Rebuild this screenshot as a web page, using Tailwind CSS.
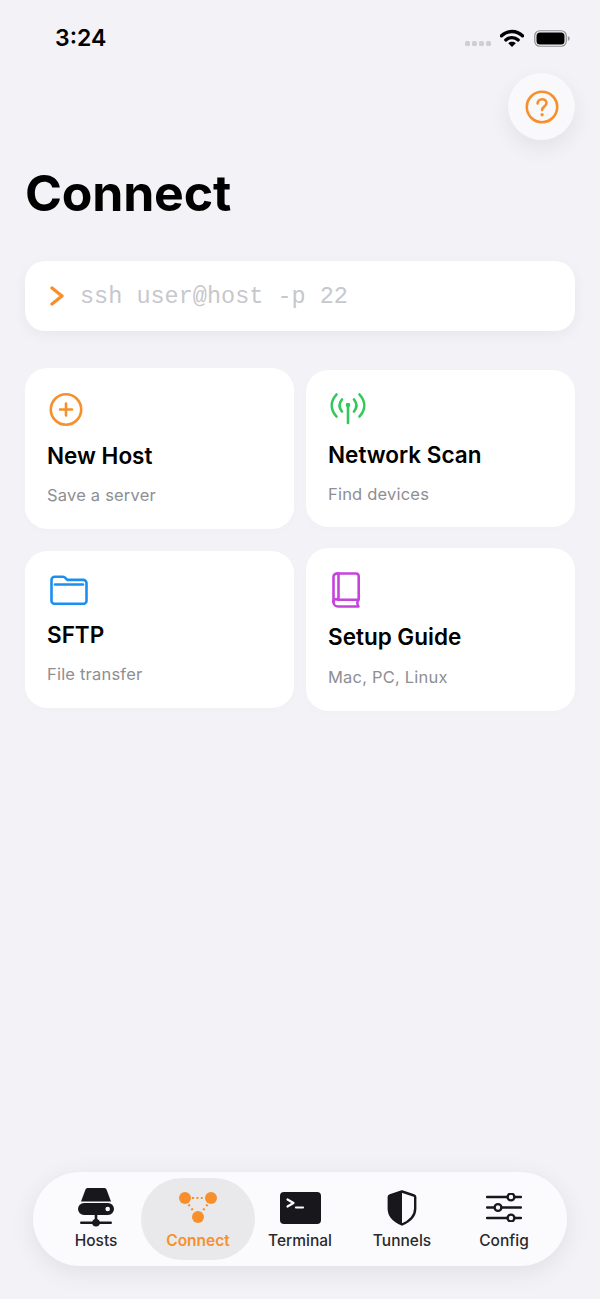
<!DOCTYPE html>
<html lang="en">
<head>
  <meta charset="UTF-8" />
  <meta name="viewport" content="width=device-width, initial-scale=1.0" />
  <title>Connect</title>
  <script src="https://cdn.jsdelivr.net/npm/@tailwindcss/browser@4"></script>
</head>
<body class="bg-[#f2f2f7] font-['Inter',sans-serif] text-black">
<div class="w-[600px] h-[1299px] flex flex-col overflow-hidden">

  <!-- status bar -->
  <div class="h-[73px] flex items-start justify-between pl-[55px] pr-[30px] pt-[23px] shrink-0">
    <span class="text-[23px] leading-[30px] font-semibold">3:24</span>
    <div class="flex items-start">
      <div class="flex gap-[2px] mt-[18px] mr-[9px]">
        <span class="w-[5px] h-[5px] rounded-[1.5px] bg-[#cfcfd3]"></span>
        <span class="w-[5px] h-[5px] rounded-[1.5px] bg-[#cfcfd3]"></span>
        <span class="w-[5px] h-[5px] rounded-[1.5px] bg-[#cfcfd3]"></span>
        <span class="w-[5px] h-[5px] rounded-[1.5px] bg-[#cfcfd3]"></span>
      </div>
      <svg class="mt-[6px]" width="24" height="18" viewBox="0 0 24 18" fill="none">
        <path d="M1.500 6.800C7.600 1.100 16.400 1.100 22.500 6.800" stroke="#000" stroke-width="3.400" stroke-linecap="round"/>
        <path d="M5.800 11C9.300 7.700 14.700 7.700 18.200 11" stroke="#000" stroke-width="3.200" stroke-linecap="round"/>
        <path d="M12 18L8.200 14.200C10.400 12.300 13.600 12.300 15.800 14.200Z" fill="#000"/>
      </svg>
      <svg class="mt-[7px] ml-[10px]" width="36" height="17" viewBox="0 0 36 17" fill="none">
        <rect x=".75" y=".75" width="31.500" height="15.500" rx="5" stroke="#8e8e93" stroke-width="1.200"/>
        <rect x="2.500" y="2.500" width="28" height="12" rx="3.500" fill="#000"/>
        <path d="M33.800 6v5c1.200-.4 2-1.400 2-2.500s-.8-2.100-2-2.500Z" fill="#9a9a9e"/>
      </svg>
    </div>
  </div>

  <!-- help button -->
  <div class="flex justify-end pr-[25px] shrink-0">
    <div class="w-[67px] h-[67px] rounded-full bg-[#f9f9fb] shadow-[0_8px_22px_rgba(0,0,0,0.07)] flex items-center justify-center">
      <svg width="34" height="34" viewBox="0 0 34 34" fill="none" stroke="#f7902c" stroke-width="2.600" stroke-linecap="round">
        <circle cx="17" cy="17" r="15.200"/>
        <path d="M12.600 13.400c0-2.500 2-4.200 4.500-4.200s4.400 1.600 4.400 3.900c0 3.400-4.400 3.600-4.400 6.800"/>
        <path d="M17.100 24.600v.2" stroke-width="3.200"/>
      </svg>
    </div>
  </div>

  <h1 class="mt-[20px] pl-[25px] text-[50px] leading-[66px] font-bold tracking-[-0.2px] shrink-0">Connect</h1>

  <!-- command field -->
  <div class="mt-[35px] mx-[25px] h-[70px] rounded-[20px] bg-white shadow-[0_4px_14px_rgba(0,0,0,0.05)] flex items-center pl-[25px] shrink-0">
    <svg width="14" height="20" viewBox="0 0 14 20" fill="none" stroke="#f7902c" stroke-width="3.400" stroke-linecap="round" stroke-linejoin="round">
      <path d="M2 2l10 8-10 8"/>
    </svg>
    <span class="ml-[16px] mt-[2px] font-['Liberation_Mono',monospace] text-[23.5px] leading-none text-[#c7c7cc]">ssh user@host -p 22</span>
  </div>

  <!-- action cards -->
  <div class="flex gap-[12px] mx-[25px] shrink-0">
    <div class="w-[269px] flex flex-col mt-[37px] gap-[22px]">
      <div class="h-[161px] rounded-[22px] bg-white shadow-[0_2px_8px_rgba(0,0,0,0.015)] pl-[22px] pt-[25px]">
        <svg class="block ml-[2px]" width="34" height="33" viewBox="0 0 34 33" fill="none" stroke="#f7902c" stroke-width="2.600" stroke-linecap="round">
          <circle cx="17" cy="16.500" r="15.200"/>
          <path d="M17 10.500v12M11 16.500h12"/>
        </svg>
        <div class="mt-[15px] text-[22.5px] leading-[30px] font-semibold">New Host</div>
        <div class="mt-[12px] text-[16.5px] leading-[24px] tracking-[0.2px] text-[#8e8e93]">Save a server</div>
      </div>
      <div class="h-[157px] rounded-[22px] bg-white shadow-[0_2px_8px_rgba(0,0,0,0.015)] pl-[22px] pt-[24px]">
        <svg class="block ml-[3px]" width="38" height="30" viewBox="0 0 38 30" fill="none" stroke="#1c8ef0" stroke-width="2.600" stroke-linejoin="round">
          <path d="M1.500 5a3.200 3.200 0 0 1 3.200-3.200h8.200c1.300 0 2 .5 2.900 1.500l1.500 1.600h15.700A3.200 3.200 0 0 1 36.500 8v17.800a3 3 0 0 1-3 3H4.500a3 3 0 0 1-3-3Z"/>
          <path d="M5 9.500h28" stroke-linecap="round"/>
        </svg>
        <div class="mt-[15px] text-[22.5px] leading-[30px] font-semibold">SFTP</div>
        <div class="mt-[12px] text-[16.5px] leading-[24px] tracking-[0.2px] text-[#8e8e93]">File transfer</div>
      </div>
    </div>
    <div class="w-[269px] flex flex-col mt-[39px] gap-[21px]">
      <div class="h-[157px] rounded-[22px] bg-white shadow-[0_2px_8px_rgba(0,0,0,0.015)] pl-[22px] pt-[23px]">
        <svg class="block ml-[2px]" width="36" height="32" viewBox="0 0 36 32" fill="none" stroke="#34c759" stroke-width="2.600" stroke-linecap="round">
          <path d="M6.500 1.500C.2 8.500.2 16.500 6.500 23.500M29.500 1.500c6.300 7 6.300 15 0 22"/>
          <path d="M12 6.500c-3.300 4-3.300 8 0 12M24 6.500c3.300 4 3.300 8 0 12"/>
          <path d="M18 12v18"/>
          <circle cx="18" cy="12" r="2.300" fill="#34c759" stroke="none"/>
        </svg>
        <div class="mt-[15px] text-[22.5px] leading-[30px] font-semibold">Network Scan</div>
        <div class="mt-[12px] text-[16.5px] leading-[24px] tracking-[0.2px] text-[#8e8e93]">Find devices</div>
      </div>
      <div class="h-[163px] rounded-[22px] bg-white shadow-[0_2px_8px_rgba(0,0,0,0.015)] pl-[22px] pt-[24px]">
        <svg class="block ml-[4px]" width="28" height="36" viewBox="0 0 28 36" fill="none" stroke="#c643dc" stroke-width="2.600" stroke-linecap="round" stroke-linejoin="round">
          <path d="M5 1.500h19a2.700 2.700 0 0 1 2.700 2.700v22.600a1 1 0 0 1-1 1H5.500"/>
          <path d="M1.500 30V5A3.500 3.500 0 0 1 5 1.500"/>
          <path d="M6.500 1.500v26.300"/>
          <path d="M1.500 30a3 3 0 0 1 3-3"/>
          <path d="M1.500 30a4.500 4.500 0 0 0 4.500 4.500h20.500c-1.500-1.800-1.500-5 0-6.700"/>
        </svg>
        <div class="mt-[14px] text-[22.5px] leading-[30px] font-semibold">Setup Guide</div>
        <div class="mt-[13px] text-[16.5px] leading-[24px] tracking-[0.2px] text-[#8e8e93]">Mac, PC, Linux</div>
      </div>
    </div>
  </div>

  <!-- tab bar -->
  <div class="mt-auto mb-[33px] mx-[33px] h-[94px] rounded-[47px] bg-[#fbfbfd] shadow-[0_6px_26px_rgba(0,0,0,0.08)] grid grid-cols-5 px-[12px] shrink-0">
    <div class="flex flex-col items-center pt-[16px]">
      <svg width="36" height="39" viewBox="0 0 36 39" fill="#17171c">
        <path d="M10 0h16c1.200 0 2 .5 2.500 1.500L33 13.500H3L7.500 1.500C8 .5 8.800 0 10 0Z"/>
        <path fill-rule="evenodd" d="M6 15h24a6 6 0 0 1 0 12H6a6 6 0 0 1 0-12Zm23.700 3.700a2.300 2.300 0 1 0 0 4.600 2.300 2.300 0 0 0 0-4.600Z"/>
        <rect x="16.700" y="27" width="2.600" height="8"/>
        <rect x="2" y="33.500" width="32" height="2.400" rx="1.200"/>
        <circle cx="18" cy="34.700" r="3.800"/>
      </svg>
      <span class="mt-[4px] text-[15.5px] leading-[20px] font-medium text-[#2a2a2e]">Hosts</span>
    </div>
    <div class="relative flex flex-col items-center pt-[20px]">
      <div class="absolute left-[-6px] right-[-6px] top-[6px] bottom-[6px] rounded-[41px] bg-[#e9e9eb]"></div>
      <svg class="relative" width="38" height="32" viewBox="0 0 38 32" fill="#f7902c">
        <circle cx="6" cy="6" r="6"/>
        <circle cx="32" cy="6" r="6"/>
        <circle cx="19" cy="25" r="6"/>
        <path d="M13 6h13" stroke="#f7902c" stroke-width="2" stroke-dasharray="2 2.400" fill="none"/>
        <path d="M9.500 12.500l6 8M28.500 12.500l-6 8" stroke="#f7902c" stroke-width="2.200" stroke-dasharray="2 3" fill="none"/>
      </svg>
      <span class="relative mt-[7px] text-[15.5px] leading-[20px] font-semibold text-[#f7902c]">Connect</span>
    </div>
    <div class="flex flex-col items-center pt-[20px]">
      <svg width="41" height="32" viewBox="0 0 41 32" fill="none">
        <rect width="41" height="32" rx="4" fill="#17171c"/>
        <path d="M7.500 7.500l6 3.500-6 3.500" stroke="#fff" stroke-width="2.200" stroke-linecap="round" stroke-linejoin="round"/>
        <path d="M16 15.500h7" stroke="#fff" stroke-width="2.200" stroke-linecap="round"/>
      </svg>
      <span class="mt-[7px] text-[15.5px] leading-[20px] font-medium text-[#2a2a2e]">Terminal</span>
    </div>
    <div class="flex flex-col items-center pt-[18px]">
      <svg width="30" height="36" viewBox="0 0 30 36" fill="none">
        <path d="M15 1.500L27 5.500a1.500 1.500 0 0 1 1.200 1.500v11.500c0 8-6 13-13.200 16C7.800 31.500 1.800 26.500 1.800 18.500V7A1.500 1.500 0 0 1 3 5.500Z" stroke="#17171c" stroke-width="2.400" stroke-linejoin="round"/>
        <path d="M15 1.500L3 5.500a1.500 1.500 0 0 0-1.200 1.500v11.500c0 8 6 13 13.200 16Z" fill="#17171c"/>
      </svg>
      <span class="mt-[5px] text-[15.5px] leading-[20px] font-medium text-[#2a2a2e]">Tunnels</span>
    </div>
    <div class="flex flex-col items-center pt-[21px]">
      <svg width="36" height="29" viewBox="0 0 36 29" fill="none" stroke="#17171c" stroke-width="2.400" stroke-linecap="round">
        <path d="M1 4h20M29 4h6M1 14.500h7M16 14.500h19M1 25h20M29 25h6"/>
        <circle cx="25" cy="4" r="3.400"/>
        <circle cx="12" cy="14.500" r="3.400"/>
        <circle cx="25" cy="25" r="3.400"/>
      </svg>
      <span class="mt-[9px] text-[15.5px] leading-[20px] font-medium text-[#2a2a2e]">Config</span>
    </div>
  </div>

</div>
</body>
</html>
